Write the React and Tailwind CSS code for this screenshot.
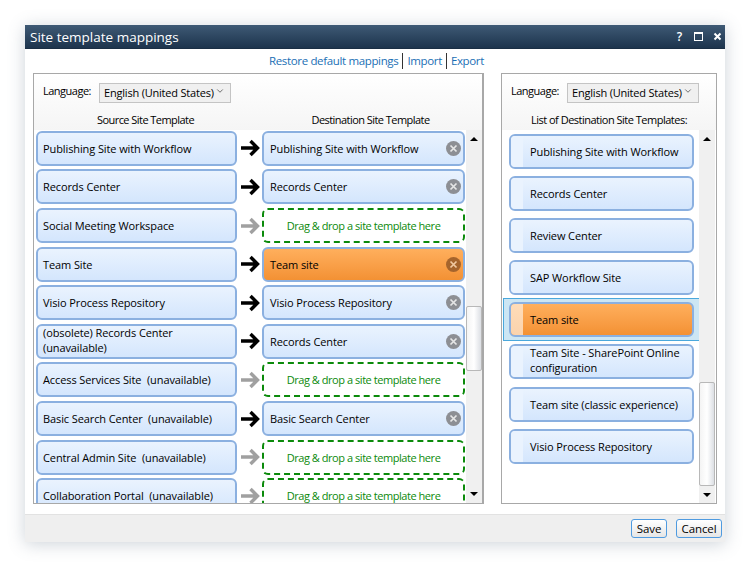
import { ChevronDown } from 'lucide-react';

const FONT = "font-['Open_Sans','Liberation_Sans',sans-serif]";

const ROWS = [
  { source: 'Publishing Site with Workflow', dest: 'Publishing Site with Workflow' },
  { source: 'Records Center', dest: 'Records Center' },
  { source: 'Social Meeting Workspace' },
  { source: 'Team Site', dest: 'Team site', active: true },
  { source: 'Visio Process Repository', dest: 'Visio Process Repository' },
  { source: '(obsolete) Records Center (unavailable)', dest: 'Records Center' },
  { source: 'Access Services Site  (unavailable)' },
  { source: 'Basic Search Center  (unavailable)', dest: 'Basic Search Center' },
  { source: 'Central Admin Site  (unavailable)' },
  { source: 'Collaboration Portal  (unavailable)' },
];

const TEMPLATES = [
  'Publishing Site with Workflow',
  'Records Center',
  'Review Center',
  'SAP Workflow Site',
  'Team site',
  'Team Site - SharePoint Online configuration',
  'Team site (classic experience)',
  'Visio Process Repository',
];

const BLUE = 'border-2 border-[#8bb0e0] bg-gradient-to-b from-[#eaf3fe] to-[#d4e6fd]';
const ORANGE = 'border-2 border-[#8bb0e0] bg-gradient-to-b from-[#ffaf5c] to-[#f39133]';

function Arrow({ active }) {
  const color = active ? '#000000' : '#a0a0a0';
  return (
    <svg width="20" height="18" viewBox="0 0 20 18" className="shrink-0">
      <path d="M1 9H17M10.5 2L17.5 9L10.5 16" fill="none" stroke={color} strokeWidth="3.4" />
    </svg>
  );
}

function RemoveIcon({ active }) {
  return (
    <span className={`w-[15px] h-[15px] rounded-full shrink-0 flex items-center justify-center ${active ? 'bg-[#a5642c]' : 'bg-[#8d8f94]'}`}>
      <svg width="9" height="9" viewBox="0 0 9 9">
        <path d="M1.5 1.5L7.5 7.5M7.5 1.5L1.5 7.5" stroke={active ? '#f0c8a0' : '#e6e6e6'} strokeWidth="1.7" />
      </svg>
    </span>
  );
}

function LanguageSelect() {
  return (
    <div className="h-[20px] w-[132px] border border-[#c4c4c4] bg-[#f0f0f0] flex items-center justify-between pl-[4px] pr-[5px] text-[11px] tracking-[-0.2px] text-black whitespace-nowrap">
      <span>English (United States)</span>
      <ChevronDown size={10} strokeWidth={2} className="text-[#555] mb-1 shrink-0" />
    </div>
  );
}

function ScrollBar({ thumbTop, thumbHeight, className }) {
  return (
    <div className={`w-[16px] bg-[#f0f0f0] flex flex-col items-center shrink-0 ${className}`}>
      <div className="h-[18px] flex items-center justify-center shrink-0">
        <div className="w-0 h-0 border-x-[4px] border-x-transparent border-b-[4px] border-b-black" />
      </div>
      <div className="flex-1 w-full flex flex-col">
        <div style={{ height: thumbTop }} className="shrink-0" />
        <div style={{ height: thumbHeight }} className="w-full border border-[#b8b8b8] rounded-[2px] bg-gradient-to-r from-[#f4f4f4] via-[#ffffff] to-[#dcdfe4] shrink-0" />
      </div>
      <div className="h-[18px] flex items-center justify-center shrink-0">
        <div className="w-0 h-0 border-x-[4px] border-x-transparent border-t-[4px] border-t-black" />
      </div>
    </div>
  );
}

function MappingRow({ row }) {
  return (
    <div className="flex items-center h-[34px] shrink-0">
      <div className={`w-[201px] h-[35px] shrink-0 rounded-[6px] px-[5px] flex items-center text-[11px] tracking-[-0.1px] leading-[15px] whitespace-pre-wrap text-black ${BLUE}`}>
        <span className={row.source.startsWith('(obsolete)') ? 'pb-[2px]' : ''}>{row.source}</span>
      </div>
      <div className="w-[25px] flex justify-center shrink-0">
        <Arrow active={!!row.dest} />
      </div>
      {row.dest ? (
        <div className={`w-[203px] h-[35px] shrink-0 rounded-[6px] pl-[6px] pr-[2px] flex items-center justify-between text-[11px] tracking-[-0.1px] leading-[15px] text-black ${row.active ? ORANGE : BLUE}`}>
          <span>{row.dest}</span>
          <RemoveIcon active={row.active} />
        </div>
      ) : (
        <div className="w-[203px] h-[35px] shrink-0 rounded-[6px] border-2 border-dashed border-[#0b8a0b] bg-white flex items-center justify-center text-[11px] tracking-[-0.45px] leading-[15px] text-[#0b8a0b]">
          Drag & drop a site template here
        </div>
      )}
    </div>
  );
}

function TemplateItem({ label }) {
  const active = label === 'Team site';
  const twoLine = label.includes('SharePoint');
  const item = (
    <div className={`w-[185px] h-[35px] shrink-0 rounded-[6px] flex overflow-hidden text-[11px] tracking-[-0.1px] leading-[15px] text-black ${active ? ORANGE : BLUE}`}>
      <div className={`w-[12px] shrink-0 ${active ? 'bg-gradient-to-b from-[#ffdcb8] to-[#fbd3ad]' : 'bg-[#eaf3fe]'}`} />
      <div className={`flex-1 flex items-center pl-[7px] pr-[2px] ${twoLine ? 'pb-[3px]' : ''}`}>{label}</div>
    </div>
  );
  if (active) {
    return (
      <div className="-ml-[6px] -my-[4px] pl-[5px] py-[3px] border border-[#4aa8dc] bg-[#cce6f4] w-[197px] shrink-0">
        {item}
      </div>
    );
  }
  return item;
}

export default function App() {
  return (
    <div className={`w-[750px] h-[567px] bg-white pt-[25px] pl-[25px] overflow-hidden ${FONT}`}>
      <div className="w-[700px] h-[517px] bg-white flex flex-col shadow-[0_2px_16px_rgba(90,110,130,0.3)]">
        <div className="h-[24px] shrink-0 bg-gradient-to-b from-[#3f5a75] to-[#1d344d] border-b border-[#1a2e44] flex items-center justify-between pl-[5px] pr-[3px]">
          <span className="text-[13.5px] text-white pt-[1px]">Site template mappings</span>
          <div className="flex items-center gap-[10px] text-white">
            <span className="text-[12px] font-semibold leading-none w-[9px] text-center">?</span>
            <span className="w-[9px] h-[9px] border border-white border-t-2" />
            <svg width="9" height="9" viewBox="0 0 9 9">
              <path d="M1.5 1.5L7.5 7.5M7.5 1.5L1.5 7.5" stroke="#fff" strokeWidth="2" />
            </svg>
          </div>
        </div>

        <div className="h-[24px] shrink-0 flex items-center justify-center text-[11.5px] tracking-[-0.35px] text-[#1b6fb5] pl-[3px]">
          <span>Restore default mappings</span>
          <span className="w-[1px] h-[16px] bg-[#333] mx-[4px]" />
          <span>Import</span>
          <span className="w-[1px] h-[16px] bg-[#333] mx-[4px]" />
          <span>Export</span>
        </div>

        <div className="flex-1 flex px-[8px] gap-[17px] min-h-0">
          <div className="w-[451px] h-[431px] border border-[#a8a8a8] border-r-2 flex flex-col overflow-hidden">
            <div className="h-[56px] shrink-0 bg-gradient-to-b from-white to-[#f5f5f5]">
              <div className="flex items-center pl-[9px] pt-[9px] text-[11px] tracking-[-0.5px] text-black">
                <span className="w-[56px] -mt-[3px]">Language:</span>
                <LanguageSelect />
              </div>
              <div className="flex text-[11px] tracking-[-0.55px] text-black pt-[9px] pl-[11px]">
                <span className="w-[201px] text-center">Source Site Template</span>
                <span className="w-[23px]" />
                <span className="w-[203px] text-center">Destination Site Template</span>
              </div>
            </div>
            <div className="flex-1 flex min-h-0">
              <div className="flex-1 pl-[2px] pt-[1.4px] flex flex-col gap-[4.6px] overflow-hidden">
                {ROWS.map((row) => (
                  <MappingRow key={row.source} row={row} />
                ))}
              </div>
              <ScrollBar thumbTop={158} thumbHeight={65} />
            </div>
          </div>

          <div className="w-[216px] h-[431px] border border-[#a8a8a8] flex flex-col overflow-hidden">
            <div className="h-[56px] shrink-0 bg-gradient-to-b from-white to-[#f5f5f5]">
              <div className="flex items-center pl-[9px] pt-[9px] text-[11px] tracking-[-0.5px] text-black">
                <span className="w-[56px] -mt-[3px]">Language:</span>
                <LanguageSelect />
              </div>
              <div className="text-[11px] tracking-[-0.5px] text-black text-center pt-[9px]">List of Destination Site Templates:</div>
            </div>
            <div className="flex-1 flex min-h-0">
              <div className="flex-1 pl-[7px] pt-[4px] flex flex-col gap-[7.1px] overflow-hidden">
                {TEMPLATES.map((t) => (
                  <TemplateItem key={t} label={t} />
                ))}
              </div>
              <ScrollBar thumbTop={234} thumbHeight={104} className="mr-[1px]" />
            </div>
          </div>
        </div>

        <div className="h-[28px] shrink-0 bg-[#efefef] border-t border-[#e2e2e2] flex items-center justify-end gap-[9px] pr-[3px] text-[11.5px] tracking-[-0.1px] text-black">
          <button className="w-[36px] h-[19px] rounded-[3px] border border-[#4f9be0] bg-gradient-to-b from-white to-[#e6e6e6] flex items-center justify-center">Save</button>
          <button className="w-[46px] h-[19px] rounded-[3px] border border-[#4f9be0] bg-gradient-to-b from-white to-[#e6e6e6] flex items-center justify-center">Cancel</button>
        </div>
      </div>
    </div>
  );
}
